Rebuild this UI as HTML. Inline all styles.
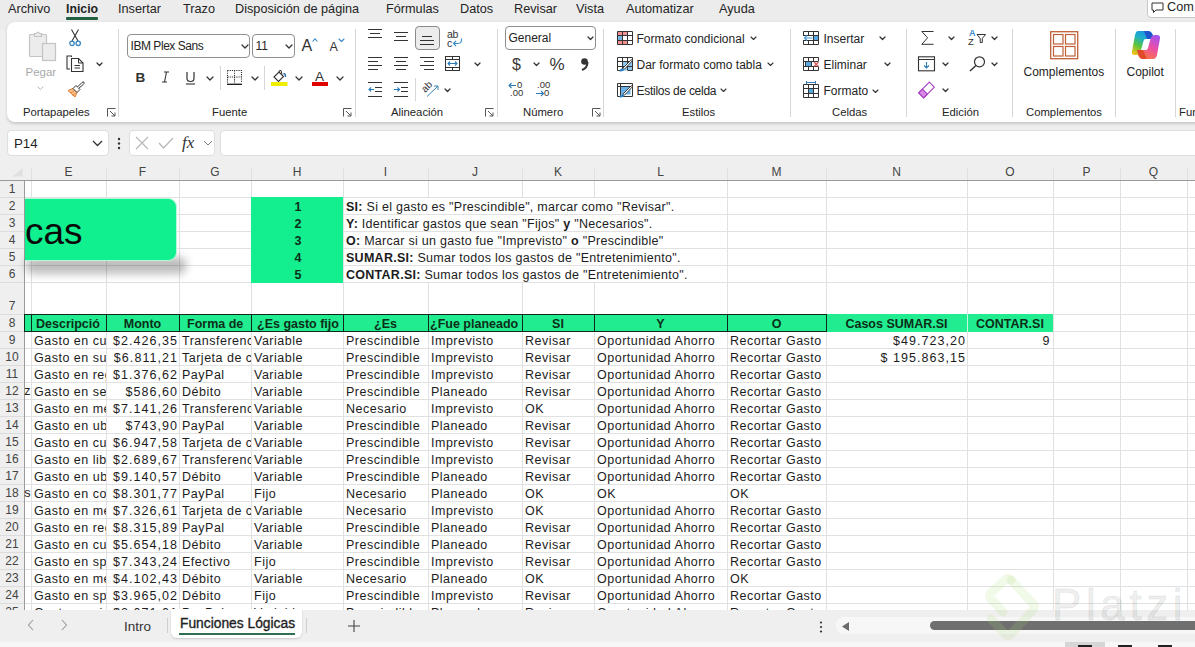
<!DOCTYPE html><html><head><meta charset="utf-8"><style>
*{margin:0;padding:0;box-sizing:border-box}
body{width:1195px;height:647px;overflow:hidden;position:relative;background:#efefef;font-family:"Liberation Sans",sans-serif;color:#242424}
.a{position:absolute;white-space:nowrap}
.t{font-size:12.7px;color:#242424}
.rb{font-size:12px;color:#242424}
.lbl{font-size:11.3px;color:#242424}
.cell{position:absolute;white-space:nowrap;overflow:hidden;font-size:12px;letter-spacing:0.6px;color:#1f1f1f;line-height:17px;padding-left:3px}
.num{letter-spacing:1px;text-align:right;padding-right:3px;padding-left:0}
.gl{position:absolute;background:#e1e1e1}
svg{position:absolute;overflow:visible}
</style></head><body>
<div class="a" style="left:0;top:0;width:1195px;height:30px;background:#ececec"></div>
<div class="a t" style="left:8px;top:1px;line-height:16px">Archivo</div>
<div class="a t" style="left:66px;top:1px;line-height:16px;font-weight:bold;font-size:12.3px">Inicio</div>
<div class="a t" style="left:118px;top:1px;line-height:16px">Insertar</div>
<div class="a t" style="left:183px;top:1px;line-height:16px">Trazo</div>
<div class="a t" style="left:235px;top:1px;line-height:16px">Disposición de página</div>
<div class="a t" style="left:386px;top:1px;line-height:16px">Fórmulas</div>
<div class="a t" style="left:460px;top:1px;line-height:16px">Datos</div>
<div class="a t" style="left:514px;top:1px;line-height:16px">Revisar</div>
<div class="a t" style="left:576px;top:1px;line-height:16px">Vista</div>
<div class="a t" style="left:626px;top:1px;line-height:16px">Automatizar</div>
<div class="a t" style="left:719px;top:1px;line-height:16px">Ayuda</div>
<div class="a" style="left:66px;top:17px;width:32px;height:3px;background:#1e6040;border-radius:1.5px;border-radius:1px"></div>
<div class="a" style="left:1147px;top:-4px;width:60px;height:22px;background:#fff;border:1px solid #c8c8c8;border-radius:4px"></div>
<div class="a t" style="left:1167px;top:-1px;line-height:16px">Com</div>
<div class="a" style="left:7px;top:22px;width:1200px;height:100px;background:#fff;border-radius:8px;box-shadow:0 1.5px 3px rgba(0,0,0,0.16)"></div>
<div class="a" style="left:118px;top:29px;width:1px;height:88px;background:#d6d6d6"></div>
<div class="a" style="left:355px;top:29px;width:1px;height:88px;background:#d6d6d6"></div>
<div class="a" style="left:497px;top:29px;width:1px;height:88px;background:#d6d6d6"></div>
<div class="a" style="left:603px;top:29px;width:1px;height:88px;background:#d6d6d6"></div>
<div class="a" style="left:790px;top:29px;width:1px;height:88px;background:#d6d6d6"></div>
<div class="a" style="left:906px;top:29px;width:1px;height:88px;background:#d6d6d6"></div>
<div class="a" style="left:1012px;top:29px;width:1px;height:88px;background:#d6d6d6"></div>
<div class="a" style="left:1115px;top:29px;width:1px;height:88px;background:#d6d6d6"></div>
<div class="a" style="left:1175px;top:29px;width:1px;height:88px;background:#d6d6d6"></div>
<div class="a lbl" style="left:23px;top:106px;line-height:13px">Portapapeles</div>
<div class="a lbl" style="left:212px;top:106px;line-height:13px">Fuente</div>
<div class="a lbl" style="left:391px;top:106px;line-height:13px">Alineación</div>
<div class="a lbl" style="left:523px;top:106px;line-height:13px">Número</div>
<div class="a lbl" style="left:682px;top:106px;line-height:13px">Estilos</div>
<div class="a lbl" style="left:832px;top:106px;line-height:13px">Celdas</div>
<div class="a lbl" style="left:942px;top:106px;line-height:13px">Edición</div>
<div class="a lbl" style="left:1026px;top:106px;line-height:13px">Complementos</div>
<div class="a lbl" style="left:1179px;top:106px;line-height:13px">Fur</div>
<svg style="left:28px;top:30px" width="30" height="32">
<rect x="1.5" y="4.5" width="17" height="22" fill="#ececec" stroke="#c4c4c4" stroke-width="1.2" rx="1"/>
<path d="M6.5 6.5 V3.5 H8.5 Q10 0.8 11.5 3.5 H13.5 V6.5 Z" fill="#ececec" stroke="#c4c4c4" stroke-width="1.2"/>
<rect x="14.5" y="13.5" width="13" height="17" fill="#ececec" stroke="#c4c4c4" stroke-width="1.2"/>
</svg>
<div class="a" style="left:25.5px;top:67.2px;font-size:11.5px;line-height:11.5px;color:#a9a9a9;">Pegar</div>
<svg style="left:36.5px;top:85.5px" width="7" height="4.5"><path d="M1 1 L3.5 3.5 L6 1" stroke="#b5b5b5" stroke-width="1" fill="none" stroke-linecap="round" stroke-linejoin="round"/></svg>
<svg style="left:69px;top:29px" width="13" height="18">
<path d="M2.5 0.5 L9 12 M9.5 0.5 L3 12" stroke="#333" stroke-width="1.1" fill="none"/>
<circle cx="3" cy="14.3" r="2.2" fill="none" stroke="#3c86c4" stroke-width="1.3"/>
<circle cx="9.2" cy="14.3" r="2.2" fill="none" stroke="#3c86c4" stroke-width="1.3"/>
</svg>
<svg style="left:66px;top:55px" width="19" height="18">
<path d="M5.5 2 V1 H1 V14 H4" stroke="#333" stroke-width="1.1" fill="none"/>
<path d="M5.5 3.5 H12.5 L17 8 V16.5 H5.5 Z" stroke="#333" stroke-width="1.1" fill="#fff"/>
<path d="M12.5 3.5 V8 H17 M8.5 10.5 H14 M8.5 13 H14" stroke="#333" stroke-width="1" fill="none"/>
</svg>
<svg style="left:95.5px;top:61.5px" width="7" height="4.5"><path d="M1 1 L3.5 3.5 L6 1" stroke="#333" stroke-width="1.25" fill="none" stroke-linecap="round" stroke-linejoin="round"/></svg>
<svg style="left:67px;top:81px" width="18" height="17">
<path d="M1 9.5 L6 7.5 L10 11.5 L8 16 Z" fill="#f9c38a" stroke="#e0782c" stroke-width="1" stroke-linejoin="round"/>
<path d="M3.5 12 L7 10 M5.5 14.5 L8.5 12" stroke="#e0782c" stroke-width="0.8"/>
<path d="M6 7.5 L9 4.5 L13 8.5 L10 11.5 Z" fill="#fff" stroke="#333" stroke-width="1" stroke-linejoin="round"/>
<path d="M10.5 6 L15 1.5 Q16.3 0.5 17 1.3 Q17.6 2.2 16.5 3.3 L11.8 7.3" fill="#fff" stroke="#333" stroke-width="1"/>
</svg>
<svg style="left:107px;top:108px" width="9" height="9"><path d="M0.5 8.5 V0.5 H8.5" stroke="#555" stroke-width="1" fill="none"/><path d="M3 3 L8 8 M8 4.5 V8 H4.5" stroke="#555" stroke-width="1" fill="none"/></svg>
<div class="a" style="left:127px;top:34px;width:123px;height:24px;border:1px solid #8f8f8f;border-radius:4px;background:#fff"></div>
<div class="a" style="left:130.5px;top:40.0px;font-size:12px;line-height:12px;color:#242424;letter-spacing:-0.45px">IBM Plex Sans</div>
<svg style="left:240.5px;top:43.5px" width="8" height="5.0"><path d="M1 1 L4.0 4.0 L7 1" stroke="#333" stroke-width="1.25" fill="none" stroke-linecap="round" stroke-linejoin="round"/></svg>
<div class="a" style="left:252px;top:34px;width:43px;height:24px;border:1px solid #8f8f8f;border-radius:4px;background:#fff"></div>
<div class="a" style="left:255.5px;top:40.0px;font-size:12px;line-height:12px;color:#242424;">11</div>
<svg style="left:285px;top:43.5px" width="8" height="5.0"><path d="M1 1 L4.0 4.0 L7 1" stroke="#333" stroke-width="1.25" fill="none" stroke-linecap="round" stroke-linejoin="round"/></svg>
<div class="a" style="left:301.5px;top:37.7px;font-size:16px;line-height:16px;color:#333;">A</div>
<svg style="left:312px;top:38px" width="7" height="4"><path d="M0.5 3.5 L3 0.8 L5.5 3.5" stroke="#3a8cc8" stroke-width="1.1" fill="none"/></svg>
<div class="a" style="left:329.5px;top:40.6px;font-size:12.5px;line-height:12.5px;color:#333;">A</div>
<svg style="left:337.5px;top:37.5px" width="7" height="4.5"><path d="M1 1 L3.5 3.5 L6 1" stroke="#3a8cc8" stroke-width="1.1" fill="none" stroke-linecap="round" stroke-linejoin="round"/></svg>
<div class="a" style="left:135.5px;top:70.6px;font-size:13.5px;line-height:13.5px;color:#333;font-weight:bold">B</div>
<svg style="left:161px;top:71px" width="9" height="12"><path d="M3 1 H8 M1 11 H6 M5.5 1 L3.5 11" stroke="#333" stroke-width="1.1" fill="none"/></svg>
<svg style="left:185px;top:71px" width="11" height="14"><path d="M2 1 V7.5 Q2 10.5 5.5 10.5 Q9 10.5 9 7.5 V1" stroke="#333" stroke-width="1.2" fill="none"/><path d="M1 13 H10" stroke="#333" stroke-width="1.1"/></svg>
<svg style="left:206px;top:75.5px" width="8" height="5.0"><path d="M1 1 L4.0 4.0 L7 1" stroke="#333" stroke-width="1.25" fill="none" stroke-linecap="round" stroke-linejoin="round"/></svg>
<div class="a" style="left:220px;top:66px;width:1px;height:24px;background:#d6d6d6"></div>
<svg style="left:226px;top:69px" width="17" height="17">
<path d="M1.5 1.5 H15.5 V14 M1.5 1.5 V14 M8.5 1.5 V14 M1.5 8 H15.5" stroke="#222" stroke-width="1.1" stroke-dasharray="1.1 1.1" fill="none"/>
<path d="M1 15.3 H16" stroke="#222" stroke-width="1.4"/>
</svg>
<svg style="left:250.5px;top:75.5px" width="8" height="5.0"><path d="M1 1 L4.0 4.0 L7 1" stroke="#333" stroke-width="1.25" fill="none" stroke-linecap="round" stroke-linejoin="round"/></svg>
<div class="a" style="left:264px;top:66px;width:1px;height:24px;background:#d6d6d6"></div>
<svg style="left:270px;top:69px" width="19" height="19">
<path d="M4 8 L9 3 L13.5 7.5 L8.5 12.5 Z" fill="#fff" stroke="#333" stroke-width="1.1"/>
<path d="M9 3 Q9 0.8 11 1.5 L12 5.5" stroke="#333" stroke-width="1" fill="none"/>
<path d="M13.5 5 Q15.5 4 15.5 8" stroke="#2a6fb0" stroke-width="1.4" fill="none"/>
<rect x="1" y="13" width="16.5" height="4" fill="#eeee00"/>
</svg>
<svg style="left:294.5px;top:75.5px" width="8" height="5.0"><path d="M1 1 L4.0 4.0 L7 1" stroke="#333" stroke-width="1.25" fill="none" stroke-linecap="round" stroke-linejoin="round"/></svg>
<div class="a" style="left:315px;top:69.6px;font-size:13.5px;line-height:13.5px;color:#333;">A</div>
<div class="a" style="left:312px;top:82px;width:16px;height:4px;background:#e00000"></div>
<svg style="left:335.5px;top:75.5px" width="8" height="5.0"><path d="M1 1 L4.0 4.0 L7 1" stroke="#333" stroke-width="1.25" fill="none" stroke-linecap="round" stroke-linejoin="round"/></svg>
<svg style="left:343px;top:108px" width="9" height="9"><path d="M0.5 8.5 V0.5 H8.5" stroke="#555" stroke-width="1" fill="none"/><path d="M3 3 L8 8 M8 4.5 V8 H4.5" stroke="#555" stroke-width="1" fill="none"/></svg>
<svg style="left:368px;top:29px" width="20" height="20"><path d="M0 0.5 H14 M2 4.5 H12 M0 8.5 H14" stroke="#333" stroke-width="1.1" fill="none"/></svg>
<svg style="left:394px;top:32px" width="20" height="20"><path d="M0 0.5 H14 M2 4.5 H12 M0 8.5 H14" stroke="#333" stroke-width="1.1" fill="none"/></svg>
<div class="a" style="left:415px;top:26px;width:25px;height:24px;background:#ececec;border:1px solid #8a8a8a;border-radius:4px"></div>
<svg style="left:420px;top:36px" width="20" height="20"><path d="M2 0.5 H12 M0 4.5 H14 M0 8.5 H14" stroke="#333" stroke-width="1.1" fill="none"/></svg>
<div class="a" style="left:447px;top:30px;font-size:10.5px;line-height:9px;color:#333;letter-spacing:-0.3px">ab<br>c</div>
<svg style="left:452px;top:38px" width="11" height="9"><path d="M9.5 0.5 Q10 5.5 6 5.5 H1.5 M4 3 L1.5 5.5 L4 8" stroke="#3a8cc8" stroke-width="1.1" fill="none"/></svg>
<svg style="left:368px;top:57px" width="20" height="20"><path d="M0 0.5 H14 M0 4.5 H10 M0 8.5 H14 M0 12.5 H10" stroke="#333" stroke-width="1.1" fill="none"/></svg>
<svg style="left:394px;top:57px" width="20" height="20"><path d="M0 0.5 H14 M2 4.5 H12 M0 8.5 H14 M2 12.5 H12" stroke="#333" stroke-width="1.1" fill="none"/></svg>
<svg style="left:420px;top:57px" width="20" height="20"><path d="M0 0.5 H14 M4 4.5 H14 M0 8.5 H14 M4 12.5 H14" stroke="#333" stroke-width="1.1" fill="none"/></svg>
<svg style="left:445px;top:56px" width="16" height="16">
<rect x="0.5" y="0.5" width="14" height="14" fill="#fff" stroke="#333" stroke-width="1"/>
<path d="M7.5 0.5 V3.5 M7.5 11.5 V14.5 M0.5 3.5 H14.5 M0.5 11.5 H14.5" stroke="#333" stroke-width="1"/>
<path d="M3 7.5 H12 M5 5.5 L3 7.5 L5 9.5 M10 5.5 L12 7.5 L10 9.5" stroke="#2a7ab8" stroke-width="1.1" fill="none"/>
</svg>
<svg style="left:474px;top:62px" width="7" height="4.5"><path d="M1 1 L3.5 3.5 L6 1" stroke="#333" stroke-width="1.25" fill="none" stroke-linecap="round" stroke-linejoin="round"/></svg>
<svg style="left:368px;top:82px" width="16" height="16">
<path d="M0 0.5 H14 M7 5.5 H14 M7 9.5 H14 M0 14.5 H14" stroke="#333" stroke-width="1.1"/>
<path d="M6 7.5 H1 M3 5.5 L1 7.5 L3 9.5" stroke="#2a7ab8" stroke-width="1.1" fill="none"/>
</svg>
<svg style="left:394px;top:82px" width="16" height="16">
<path d="M0 0.5 H14 M7 5.5 H14 M7 9.5 H14 M0 14.5 H14" stroke="#333" stroke-width="1.1"/>
<path d="M0 7.5 H5.5 M3.5 5.5 L5.5 7.5 L3.5 9.5" stroke="#2a7ab8" stroke-width="1.1" fill="none"/>
</svg>
<div class="a" style="left:415px;top:78px;width:1px;height:23px;background:#d6d6d6"></div>
<div class="a" style="left:420px;top:82px;width:14px;height:10px;font-size:10px;line-height:10px;color:#333;transform:rotate(-45deg);transform-origin:center center;text-align:center">ab</div>
<svg style="left:426px;top:84px" width="14" height="14"><path d="M1 12.5 L12 2 M8 2 H12 V6" stroke="#3a80b0" stroke-width="1" fill="none"/></svg>
<svg style="left:443.5px;top:88px" width="7" height="4.5"><path d="M1 1 L3.5 3.5 L6 1" stroke="#333" stroke-width="1.25" fill="none" stroke-linecap="round" stroke-linejoin="round"/></svg>
<svg style="left:485px;top:108px" width="9" height="9"><path d="M0.5 8.5 V0.5 H8.5" stroke="#555" stroke-width="1" fill="none"/><path d="M3 3 L8 8 M8 4.5 V8 H4.5" stroke="#555" stroke-width="1" fill="none"/></svg>
<div class="a" style="left:505px;top:26px;width:91px;height:24px;border:1px solid #8f8f8f;border-radius:4px;background:#fff"></div>
<div class="a" style="left:508.5px;top:32.0px;font-size:12px;line-height:12px;color:#242424;">General</div>
<svg style="left:586.5px;top:36px" width="7" height="4.5"><path d="M1 1 L3.5 3.5 L6 1" stroke="#333" stroke-width="1.25" fill="none" stroke-linecap="round" stroke-linejoin="round"/></svg>
<div class="a" style="left:512px;top:57.2px;font-size:16px;line-height:16px;color:#3a3a3a;">$</div>
<svg style="left:532.5px;top:61.5px" width="7" height="4.5"><path d="M1 1 L3.5 3.5 L6 1" stroke="#333" stroke-width="1.25" fill="none" stroke-linecap="round" stroke-linejoin="round"/></svg>
<div class="a" style="left:549.5px;top:56.2px;font-size:17px;line-height:17px;color:#333;font-weight:normal;-webkit-text-stroke:0">%</div>
<svg style="left:580px;top:57px" width="9" height="14"><circle cx="4.5" cy="4.5" r="3.3" fill="#333"/><path d="M7.5 5 Q7.5 11 2 13" stroke="#333" stroke-width="2" fill="none"/></svg>
<svg style="left:508px;top:82px" width="9" height="7"><path d="M8 3.5 H1 M3.5 1 L1 3.5 L3.5 6" stroke="#2a7ab8" stroke-width="1.1" fill="none"/></svg>
<div class="a" style="left:517px;top:81px;font-size:9.5px;line-height:8px;color:#333">0</div>
<div class="a" style="left:510px;top:89px;font-size:9.5px;line-height:8px;color:#333">.00</div>
<div class="a" style="left:537px;top:81px;font-size:9.5px;line-height:8px;color:#333">.00</div>
<div class="a" style="left:544px;top:89px;font-size:9.5px;line-height:8px;color:#333">0</div>
<svg style="left:535px;top:90px" width="10" height="7"><path d="M1 3.5 H8.5 M6 1 L8.5 3.5 L6 6" stroke="#2a7ab8" stroke-width="1.1" fill="none"/></svg>
<svg style="left:592px;top:108px" width="9" height="9"><path d="M0.5 8.5 V0.5 H8.5" stroke="#555" stroke-width="1" fill="none"/><path d="M3 3 L8 8 M8 4.5 V8 H4.5" stroke="#555" stroke-width="1" fill="none"/></svg>
<svg style="left:616px;top:30px" width="18" height="16">
<rect x="1.5" y="1.5" width="10" height="4" fill="#f39090"/>
<rect x="1.5" y="10.5" width="10" height="4" fill="#f39090"/>
<rect x="1.5" y="5.5" width="5" height="5" fill="#7ab4e0"/>
<path d="M1.5 1.5 H16.5 V14.5 H1.5 Z M6.5 1.5 V14.5 M11.5 1.5 V14.5 M1.5 5.5 H16.5 M1.5 10.5 H16.5" stroke="#333" stroke-width="1" fill="none"/>
</svg>
<div class="a" style="left:636.5px;top:33.0px;font-size:12px;line-height:12px;color:#242424;">Formato condicional</div>
<svg style="left:749.5px;top:36px" width="7" height="4.5"><path d="M1 1 L3.5 3.5 L6 1" stroke="#333" stroke-width="1.1" fill="none" stroke-linecap="round" stroke-linejoin="round"/></svg>
<svg style="left:616px;top:56px" width="18" height="16">
<rect x="6.5" y="5.5" width="10" height="9" fill="#8ec6ee"/>
<path d="M1.5 14.5 V1.5 H16.5 V14.5 M6.5 1.5 V14.5 M11.5 1.5 V14.5 M1.5 5.5 H16.5 M1.5 10.5 H16.5 M1.5 14.5 H5 M12 14.5 H16.5" stroke="#333" stroke-width="1" fill="none"/>
<path d="M6.5 12.5 L14.8 4.2 Q16.3 3 16.6 4.6 L8.3 13.3 Z" fill="#fff" stroke="#333" stroke-width="0.9"/>
<path d="M3.5 15.5 Q3.8 12.3 6.5 12.5 L8.3 13.3 Q7.8 15.8 3.5 15.5 Z" fill="#2f7fc4"/>
</svg>
<div class="a" style="left:636.5px;top:59.0px;font-size:12px;line-height:12px;color:#242424;">Dar formato como tabla</div>
<svg style="left:766.5px;top:62px" width="7" height="4.5"><path d="M1 1 L3.5 3.5 L6 1" stroke="#333" stroke-width="1.1" fill="none" stroke-linecap="round" stroke-linejoin="round"/></svg>
<svg style="left:616px;top:82px" width="18" height="16">
<rect x="4.5" y="4.5" width="10" height="8" fill="#6ab0e4"/>
<path d="M1.5 1.5 H16.5 V14.5 H1.5 Z M1.5 4.5 H16.5 M4.5 1.5 V14.5" stroke="#333" stroke-width="1" fill="none"/>
<path d="M6.5 12.5 L14.8 4.2 Q16.3 3 16.6 4.6 L8.3 13.3 Z" fill="#fff" stroke="#333" stroke-width="0.9"/>
<path d="M3.5 15.5 Q3.8 12.3 6.5 12.5 L8.3 13.3 Q7.8 15.8 3.5 15.5 Z" fill="#2f7fc4"/>
</svg>
<div class="a" style="left:636.5px;top:84.5px;font-size:12px;line-height:12px;color:#242424;letter-spacing:-0.27px">Estilos de celda</div>
<svg style="left:719.5px;top:88px" width="7" height="4.5"><path d="M1 1 L3.5 3.5 L6 1" stroke="#333" stroke-width="1.1" fill="none" stroke-linecap="round" stroke-linejoin="round"/></svg>
<svg style="left:802px;top:30px" width="18" height="16">
<rect x="11.5" y="5.5" width="5" height="5" fill="#5aa6de"/>
<path d="M1.5 1.5 H16.5 V14.5 H1.5 Z M6.5 1.5 V14.5 M11.5 1.5 V14.5 M1.5 5.5 H16.5 M1.5 10.5 H16.5" stroke="#333" stroke-width="1" fill="none"/>
<rect x="1" y="6" width="10" height="4" fill="#fff"/>
<path d="M10.5 8 H2.5 M5 5.5 L2.5 8 L5 10.5" stroke="#4a9ad6" stroke-width="1.2" fill="none"/>
</svg>
<div class="a" style="left:823.5px;top:33.0px;font-size:12px;line-height:12px;color:#242424;">Insertar</div>
<svg style="left:879px;top:36px" width="7" height="4.5"><path d="M1 1 L3.5 3.5 L6 1" stroke="#333" stroke-width="1.25" fill="none" stroke-linecap="round" stroke-linejoin="round"/></svg>
<svg style="left:802px;top:56px" width="18" height="16">
<path d="M1.5 1.5 H16.5 M1.5 14.5 H16.5 M1.5 1.5 V14.5 M16.5 1.5 V5 M16.5 11 V14.5 M6.5 1.5 V5.5 M11.5 1.5 V5.5 M6.5 10.5 V14.5 M11.5 10.5 V14.5 M1.5 5.5 H3.5 M1.5 10.5 H3.5 M9.5 5.5 H16.5 M9.5 10.5 H16.5" stroke="#333" stroke-width="1" fill="none"/>
<rect x="3.5" y="5.5" width="6" height="5" fill="#5aa6de" stroke="#333" stroke-width="1"/>
<path d="M12 6 L16.5 10.5 M16.5 6 L12 10.5" stroke="#e05050" stroke-width="1.1"/>
</svg>
<div class="a" style="left:823.5px;top:59.0px;font-size:12px;line-height:12px;color:#242424;">Eliminar</div>
<svg style="left:883.5px;top:62px" width="7" height="4.5"><path d="M1 1 L3.5 3.5 L6 1" stroke="#333" stroke-width="1.25" fill="none" stroke-linecap="round" stroke-linejoin="round"/></svg>
<svg style="left:802px;top:81px" width="18" height="18">
<rect x="6.5" y="7.5" width="5" height="5" fill="#5aa6de"/>
<path d="M4.5 1.5 H13.5 M4.5 0 V3 M13.5 0 V3" stroke="#3a80c0" stroke-width="1"/>
<path d="M1.5 3.5 H16.5 V16.5 H1.5 Z M6.5 3.5 V16.5 M11.5 3.5 V16.5 M1.5 7.5 H16.5 M1.5 12.5 H16.5" stroke="#333" stroke-width="1" fill="none"/>
</svg>
<div class="a" style="left:823.5px;top:84.5px;font-size:12px;line-height:12px;color:#242424;">Formato</div>
<svg style="left:872px;top:89px" width="7" height="4.5"><path d="M1 1 L3.5 3.5 L6 1" stroke="#333" stroke-width="1.1" fill="none" stroke-linecap="round" stroke-linejoin="round"/></svg>
<svg style="left:920px;top:30px" width="15" height="16"><path d="M13.5 1.5 H1.8 L7.6 7.8 L1.8 14.3 H13.5" stroke="#333" stroke-width="1" fill="none" stroke-linejoin="miter"/></svg>
<svg style="left:948px;top:36px" width="7" height="4.5"><path d="M1 1 L3.5 3.5 L6 1" stroke="#333" stroke-width="1.25" fill="none" stroke-linecap="round" stroke-linejoin="round"/></svg>
<div class="a" style="left:969px;top:29px;font-size:9px;line-height:8px;color:#3a8cc8;font-weight:bold">A</div>
<div class="a" style="left:968px;top:37px;font-size:9.5px;line-height:9px;color:#333">Z</div>
<svg style="left:976px;top:33px" width="11" height="11"><path d="M1 1.5 H9.5 L6.3 5.5 V9.5 H4.2 V5.5 Z" fill="#fff" stroke="#333" stroke-width="1"/></svg>
<svg style="left:991px;top:36px" width="7" height="4.5"><path d="M1 1 L3.5 3.5 L6 1" stroke="#333" stroke-width="1.25" fill="none" stroke-linecap="round" stroke-linejoin="round"/></svg>
<svg style="left:918px;top:56px" width="18" height="16">
<rect x="0.5" y="0.8" width="16" height="14" fill="#fff" stroke="#333" stroke-width="1.1"/>
<path d="M0.5 3.5 H16.5" stroke="#333" stroke-width="1"/>
<path d="M8.5 6 V12 M6 9.5 L8.5 12 L11 9.5" stroke="#2a7ab8" stroke-width="1.1" fill="none"/>
</svg>
<svg style="left:941.5px;top:61.5px" width="7" height="4.5"><path d="M1 1 L3.5 3.5 L6 1" stroke="#333" stroke-width="1.25" fill="none" stroke-linecap="round" stroke-linejoin="round"/></svg>
<svg style="left:969px;top:56px" width="17" height="16"><circle cx="10.5" cy="5.8" r="5" fill="none" stroke="#333" stroke-width="1.2"/><path d="M7 9.5 L1 15" stroke="#333" stroke-width="1.4"/></svg>
<svg style="left:991px;top:62px" width="7" height="4.5"><path d="M1 1 L3.5 3.5 L6 1" stroke="#333" stroke-width="1.25" fill="none" stroke-linecap="round" stroke-linejoin="round"/></svg>
<svg style="left:918px;top:82px" width="18" height="17">
<path d="M16.3 5.2 L11.3 0.2 L0.7 10.8 L5.7 15.8 Z" fill="#fff" stroke="#a63cc0" stroke-width="1.1" stroke-linejoin="round"/>
<path d="M0.7 10.8 L4.4 7.1 L9.4 12.1 L5.7 15.8 Z" fill="#d98ae8" stroke="#a63cc0" stroke-width="1.1" stroke-linejoin="round"/>
</svg>
<svg style="left:941.5px;top:87.5px" width="7" height="4.5"><path d="M1 1 L3.5 3.5 L6 1" stroke="#333" stroke-width="1.25" fill="none" stroke-linecap="round" stroke-linejoin="round"/></svg>
<svg style="left:1050px;top:31px" width="29" height="29">
<rect x="0.7" y="0.7" width="27" height="27" fill="#fff" stroke="#c06038" stroke-width="1.3"/>
<rect x="3.5" y="3.5" width="9.5" height="9.5" fill="none" stroke="#c06038" stroke-width="1.2"/>
<rect x="15.5" y="3.5" width="9.5" height="9.5" fill="none" stroke="#c06038" stroke-width="1.2"/>
<rect x="3.5" y="15.5" width="9.5" height="9.5" fill="none" stroke="#c06038" stroke-width="1.2"/>
<rect x="15.5" y="15.5" width="9.5" height="9.5" fill="none" stroke="#c06038" stroke-width="1.2"/>
</svg>
<div class="a" style="left:1023.5px;top:65.5px;font-size:12px;line-height:12px;color:#242424;">Complementos</div>
<svg style="left:1131px;top:30px" width="31" height="30">
<defs>
<linearGradient id="cg1" x1="0.7" y1="0" x2="0.2" y2="1"><stop offset="0" stop-color="#1a8ee8"/><stop offset="0.35" stop-color="#20b0c8"/><stop offset="0.65" stop-color="#58c43c"/><stop offset="1" stop-color="#f2c21a"/></linearGradient>
<linearGradient id="cg2" x1="0.8" y1="0" x2="0.3" y2="1"><stop offset="0" stop-color="#a452ee"/><stop offset="0.5" stop-color="#ee4fa2"/><stop offset="1" stop-color="#f87a3c"/></linearGradient>
</defs>
<path d="M7 1 H17 Q20 1 21.5 4.5 L23 9 H14.5 Q13 9 12.5 11 L10 20 Q9 25 5 25 H3.5 Q0.5 25 1 21.5 L4 5 Q5 1 7 1 Z" fill="url(#cg1)"/>
<path d="M13 1 H17 Q20 1 21.5 4.5 L23 9 H16 Z" fill="#1f55cc"/>
<path d="M22 29 H12 Q9 29 7.5 25.5 L6 20 H15 Q16.5 20 17 18 L19.5 9 Q20.5 5 24.5 5 H26 Q29.5 5 29 8.5 L26 25 Q25 29 22 29 Z" fill="url(#cg2)"/>
<path d="M6 20 H12 L16 29 H12 Q9 29 7.5 25.5 Z" fill="#e24a2c"/>
</svg>
<div class="a" style="left:1126.5px;top:65.5px;font-size:12px;line-height:12px;color:#242424;">Copilot</div>
<svg style="left:1151px;top:2px" width="14" height="12"><path d="M1 1 H12 V8 H5 L2.5 10.5 V8 H1 Z" fill="none" stroke="#333" stroke-width="1" stroke-linejoin="round"/></svg>
<div class="a" style="left:7px;top:130px;width:102px;height:26px;background:#fff;border:1px solid #dedede;border-radius:4px"></div>
<div class="a" style="left:14px;top:137px;font-size:13.3px;line-height:14px;color:#1f1f1f">P14</div>
<svg style="left:92px;top:140px" width="11" height="7"><path d="M1 1 L5.5 5.5 L10 1" stroke="#333" stroke-width="1.3" fill="none"/></svg>
<svg style="left:117px;top:137px" width="4" height="13"><circle cx="2" cy="2" r="1.2" fill="#333"/><circle cx="2" cy="6.5" r="1.2" fill="#333"/><circle cx="2" cy="11" r="1.2" fill="#333"/></svg>
<div class="a" style="left:129px;top:130px;width:86px;height:26px;background:#fff;border:1px solid #dedede;border-radius:4px"></div>
<svg style="left:135px;top:136px" width="14" height="14"><path d="M1 1 L13 13 M13 1 L1 13" stroke="#b8b8b8" stroke-width="1.2"/></svg>
<svg style="left:158px;top:137px" width="16" height="12"><path d="M1 6 L5.5 11 L15 1" stroke="#b8b8b8" stroke-width="1.2" fill="none"/></svg>
<div class="a" style="left:182px;top:133px;font-family:'Liberation Serif',serif;font-style:italic;font-size:17px;line-height:20px;color:#333">fx</div>
<svg style="left:203px;top:140px" width="10" height="6"><path d="M1 1 L5 5 L9 1" stroke="#777" stroke-width="1" fill="none"/></svg>
<div class="a" style="left:220px;top:130px;width:1000px;height:26px;background:#fff;border:1px solid #dedede;border-radius:4px"></div>
<div class="a" style="left:24px;top:180px;width:1171px;height:430px;background:#fff"></div>
<div class="gl" style="left:0;top:197px;width:1195px;height:1px"></div>
<div class="gl" style="left:0;top:214px;width:1195px;height:1px"></div>
<div class="gl" style="left:0;top:231px;width:1195px;height:1px"></div>
<div class="gl" style="left:0;top:248px;width:1195px;height:1px"></div>
<div class="gl" style="left:0;top:265px;width:1195px;height:1px"></div>
<div class="gl" style="left:0;top:282px;width:1195px;height:1px"></div>
<div class="gl" style="left:0;top:314px;width:1195px;height:1px"></div>
<div class="gl" style="left:0;top:331px;width:1195px;height:1px"></div>
<div class="gl" style="left:0;top:348px;width:1195px;height:1px"></div>
<div class="gl" style="left:0;top:365px;width:1195px;height:1px"></div>
<div class="gl" style="left:0;top:382px;width:1195px;height:1px"></div>
<div class="gl" style="left:0;top:399px;width:1195px;height:1px"></div>
<div class="gl" style="left:0;top:416px;width:1195px;height:1px"></div>
<div class="gl" style="left:0;top:433px;width:1195px;height:1px"></div>
<div class="gl" style="left:0;top:450px;width:1195px;height:1px"></div>
<div class="gl" style="left:0;top:467px;width:1195px;height:1px"></div>
<div class="gl" style="left:0;top:484px;width:1195px;height:1px"></div>
<div class="gl" style="left:0;top:501px;width:1195px;height:1px"></div>
<div class="gl" style="left:0;top:518px;width:1195px;height:1px"></div>
<div class="gl" style="left:0;top:535px;width:1195px;height:1px"></div>
<div class="gl" style="left:0;top:552px;width:1195px;height:1px"></div>
<div class="gl" style="left:0;top:569px;width:1195px;height:1px"></div>
<div class="gl" style="left:0;top:586px;width:1195px;height:1px"></div>
<div class="gl" style="left:0;top:603px;width:1195px;height:1px"></div>
<div class="gl" style="left:31px;top:168px;width:1px;height:442px"></div>
<div class="gl" style="left:106px;top:168px;width:1px;height:442px"></div>
<div class="gl" style="left:179px;top:168px;width:1px;height:442px"></div>
<div class="gl" style="left:251px;top:168px;width:1px;height:442px"></div>
<div class="gl" style="left:343px;top:168px;width:1px;height:442px"></div>
<div class="gl" style="left:428px;top:168px;width:1px;height:442px"></div>
<div class="gl" style="left:522px;top:168px;width:1px;height:442px"></div>
<div class="gl" style="left:594px;top:168px;width:1px;height:442px"></div>
<div class="gl" style="left:727px;top:168px;width:1px;height:442px"></div>
<div class="gl" style="left:826px;top:168px;width:1px;height:442px"></div>
<div class="gl" style="left:967px;top:168px;width:1px;height:442px"></div>
<div class="gl" style="left:1053px;top:168px;width:1px;height:442px"></div>
<div class="gl" style="left:1120px;top:168px;width:1px;height:442px"></div>
<div class="gl" style="left:1187px;top:168px;width:1px;height:442px"></div>
<div class="a" style="left:0;top:180px;width:24px;height:430px;background:#efefef"></div>
<div class="a" style="left:0;top:197px;width:24px;height:1px;background:#dcdcdc"></div>
<div class="a" style="left:0;top:180px;width:24px;height:17px;font-size:12px;line-height:18px;text-align:center;color:#444;padding-top:0px">1</div>
<div class="a" style="left:0;top:214px;width:24px;height:1px;background:#dcdcdc"></div>
<div class="a" style="left:0;top:197px;width:24px;height:17px;font-size:12px;line-height:18px;text-align:center;color:#444;padding-top:0px">2</div>
<div class="a" style="left:0;top:231px;width:24px;height:1px;background:#dcdcdc"></div>
<div class="a" style="left:0;top:214px;width:24px;height:17px;font-size:12px;line-height:18px;text-align:center;color:#444;padding-top:0px">3</div>
<div class="a" style="left:0;top:248px;width:24px;height:1px;background:#dcdcdc"></div>
<div class="a" style="left:0;top:231px;width:24px;height:17px;font-size:12px;line-height:18px;text-align:center;color:#444;padding-top:0px">4</div>
<div class="a" style="left:0;top:265px;width:24px;height:1px;background:#dcdcdc"></div>
<div class="a" style="left:0;top:248px;width:24px;height:17px;font-size:12px;line-height:18px;text-align:center;color:#444;padding-top:0px">5</div>
<div class="a" style="left:0;top:282px;width:24px;height:1px;background:#dcdcdc"></div>
<div class="a" style="left:0;top:265px;width:24px;height:17px;font-size:12px;line-height:18px;text-align:center;color:#444;padding-top:0px">6</div>
<div class="a" style="left:0;top:314px;width:24px;height:1px;background:#dcdcdc"></div>
<div class="a" style="left:0;top:282px;width:24px;height:32px;font-size:12px;line-height:18px;text-align:center;color:#444;padding-top:15px">7</div>
<div class="a" style="left:0;top:331px;width:24px;height:1px;background:#dcdcdc"></div>
<div class="a" style="left:0;top:314px;width:24px;height:17px;font-size:12px;line-height:18px;text-align:center;color:#444;padding-top:0px">8</div>
<div class="a" style="left:0;top:348px;width:24px;height:1px;background:#dcdcdc"></div>
<div class="a" style="left:0;top:331px;width:24px;height:17px;font-size:12px;line-height:18px;text-align:center;color:#444;padding-top:0px">9</div>
<div class="a" style="left:0;top:365px;width:24px;height:1px;background:#dcdcdc"></div>
<div class="a" style="left:0;top:348px;width:24px;height:17px;font-size:12px;line-height:18px;text-align:center;color:#444;padding-top:0px">10</div>
<div class="a" style="left:0;top:382px;width:24px;height:1px;background:#dcdcdc"></div>
<div class="a" style="left:0;top:365px;width:24px;height:17px;font-size:12px;line-height:18px;text-align:center;color:#444;padding-top:0px">11</div>
<div class="a" style="left:0;top:399px;width:24px;height:1px;background:#dcdcdc"></div>
<div class="a" style="left:0;top:382px;width:24px;height:17px;font-size:12px;line-height:18px;text-align:center;color:#444;padding-top:0px">12</div>
<div class="a" style="left:0;top:416px;width:24px;height:1px;background:#dcdcdc"></div>
<div class="a" style="left:0;top:399px;width:24px;height:17px;font-size:12px;line-height:18px;text-align:center;color:#444;padding-top:0px">13</div>
<div class="a" style="left:0;top:433px;width:24px;height:1px;background:#dcdcdc"></div>
<div class="a" style="left:0;top:416px;width:24px;height:17px;font-size:12px;line-height:18px;text-align:center;color:#444;padding-top:0px">14</div>
<div class="a" style="left:0;top:450px;width:24px;height:1px;background:#dcdcdc"></div>
<div class="a" style="left:0;top:433px;width:24px;height:17px;font-size:12px;line-height:18px;text-align:center;color:#444;padding-top:0px">15</div>
<div class="a" style="left:0;top:467px;width:24px;height:1px;background:#dcdcdc"></div>
<div class="a" style="left:0;top:450px;width:24px;height:17px;font-size:12px;line-height:18px;text-align:center;color:#444;padding-top:0px">16</div>
<div class="a" style="left:0;top:484px;width:24px;height:1px;background:#dcdcdc"></div>
<div class="a" style="left:0;top:467px;width:24px;height:17px;font-size:12px;line-height:18px;text-align:center;color:#444;padding-top:0px">17</div>
<div class="a" style="left:0;top:501px;width:24px;height:1px;background:#dcdcdc"></div>
<div class="a" style="left:0;top:484px;width:24px;height:17px;font-size:12px;line-height:18px;text-align:center;color:#444;padding-top:0px">18</div>
<div class="a" style="left:0;top:518px;width:24px;height:1px;background:#dcdcdc"></div>
<div class="a" style="left:0;top:501px;width:24px;height:17px;font-size:12px;line-height:18px;text-align:center;color:#444;padding-top:0px">19</div>
<div class="a" style="left:0;top:535px;width:24px;height:1px;background:#dcdcdc"></div>
<div class="a" style="left:0;top:518px;width:24px;height:17px;font-size:12px;line-height:18px;text-align:center;color:#444;padding-top:0px">20</div>
<div class="a" style="left:0;top:552px;width:24px;height:1px;background:#dcdcdc"></div>
<div class="a" style="left:0;top:535px;width:24px;height:17px;font-size:12px;line-height:18px;text-align:center;color:#444;padding-top:0px">21</div>
<div class="a" style="left:0;top:569px;width:24px;height:1px;background:#dcdcdc"></div>
<div class="a" style="left:0;top:552px;width:24px;height:17px;font-size:12px;line-height:18px;text-align:center;color:#444;padding-top:0px">22</div>
<div class="a" style="left:0;top:586px;width:24px;height:1px;background:#dcdcdc"></div>
<div class="a" style="left:0;top:569px;width:24px;height:17px;font-size:12px;line-height:18px;text-align:center;color:#444;padding-top:0px">23</div>
<div class="a" style="left:0;top:603px;width:24px;height:1px;background:#dcdcdc"></div>
<div class="a" style="left:0;top:586px;width:24px;height:17px;font-size:12px;line-height:18px;text-align:center;color:#444;padding-top:0px">24</div>
<div class="a" style="left:0;top:603px;width:24px;height:17px;font-size:12px;line-height:18px;text-align:center;color:#444;padding-top:0px">25</div>
<div class="a" style="left:0;top:180px;width:1195px;height:1px;background:#9a9a9a"></div>
<div class="a" style="left:24px;top:180px;width:1px;height:430px;background:#9a9a9a"></div>
<div class="a" style="left:31px;top:165px;width:75px;text-align:center;font-size:12px;line-height:14px;color:#444">E</div>
<div class="a" style="left:106px;top:165px;width:73px;text-align:center;font-size:12px;line-height:14px;color:#444">F</div>
<div class="a" style="left:179px;top:165px;width:72px;text-align:center;font-size:12px;line-height:14px;color:#444">G</div>
<div class="a" style="left:251px;top:165px;width:92px;text-align:center;font-size:12px;line-height:14px;color:#444">H</div>
<div class="a" style="left:343px;top:165px;width:85px;text-align:center;font-size:12px;line-height:14px;color:#444">I</div>
<div class="a" style="left:428px;top:165px;width:94px;text-align:center;font-size:12px;line-height:14px;color:#444">J</div>
<div class="a" style="left:522px;top:165px;width:72px;text-align:center;font-size:12px;line-height:14px;color:#444">K</div>
<div class="a" style="left:594px;top:165px;width:133px;text-align:center;font-size:12px;line-height:14px;color:#444">L</div>
<div class="a" style="left:727px;top:165px;width:99px;text-align:center;font-size:12px;line-height:14px;color:#444">M</div>
<div class="a" style="left:826px;top:165px;width:141px;text-align:center;font-size:12px;line-height:14px;color:#444">N</div>
<div class="a" style="left:967px;top:165px;width:86px;text-align:center;font-size:12px;line-height:14px;color:#444">O</div>
<div class="a" style="left:1053px;top:165px;width:67px;text-align:center;font-size:12px;line-height:14px;color:#444">P</div>
<div class="a" style="left:1120px;top:165px;width:67px;text-align:center;font-size:12px;line-height:14px;color:#444">Q</div>
<div class="a" style="left:1187px;top:165px;width:73px;text-align:center;font-size:12px;line-height:14px;color:#444">R</div>
<svg style="left:12px;top:168px" width="11" height="9"><path d="M10.5 0 L10.5 8.5 L0.5 8.5 Z" fill="#e0e0e0"/></svg>
<div class="a" style="left:32px;top:331px;width:74px;height:17px;overflow:hidden;font-size:12.5px;letter-spacing:0.5px;line-height:20px;padding-left:2px;color:#1c1c1c;">Gasto en cur</div>
<div class="a" style="left:107px;top:331px;width:72px;height:17px;overflow:hidden;font-size:12.5px;letter-spacing:0.5px;line-height:20px;padding-right:1px;text-align:right;color:#1c1c1c;letter-spacing:1.05px">$2.426,35</div>
<div class="a" style="left:180px;top:331px;width:71px;height:17px;overflow:hidden;font-size:12.5px;letter-spacing:0.5px;line-height:20px;padding-left:2px;color:#1c1c1c;">Transferencia</div>
<div class="a" style="left:252px;top:331px;width:91px;height:17px;overflow:hidden;font-size:12.5px;letter-spacing:0.5px;line-height:20px;padding-left:2px;color:#1c1c1c;">Variable</div>
<div class="a" style="left:344px;top:331px;width:84px;height:17px;overflow:hidden;font-size:12.5px;letter-spacing:0.5px;line-height:20px;padding-left:2px;color:#1c1c1c;">Prescindible</div>
<div class="a" style="left:429px;top:331px;width:93px;height:17px;overflow:hidden;font-size:12.5px;letter-spacing:0.5px;line-height:20px;padding-left:2px;color:#1c1c1c;">Imprevisto</div>
<div class="a" style="left:523px;top:331px;width:71px;height:17px;overflow:hidden;font-size:12.5px;letter-spacing:0.5px;line-height:20px;padding-left:2px;color:#1c1c1c;">Revisar</div>
<div class="a" style="left:595px;top:331px;width:132px;height:17px;overflow:hidden;font-size:12.5px;letter-spacing:0.5px;line-height:20px;padding-left:2px;color:#1c1c1c;">Oportunidad Ahorro</div>
<div class="a" style="left:728px;top:331px;width:98px;height:17px;overflow:hidden;font-size:12.5px;letter-spacing:0.5px;line-height:20px;padding-left:2px;color:#1c1c1c;">Recortar Gasto</div>
<div class="a" style="left:32px;top:348px;width:74px;height:17px;overflow:hidden;font-size:12.5px;letter-spacing:0.5px;line-height:20px;padding-left:2px;color:#1c1c1c;">Gasto en sup</div>
<div class="a" style="left:107px;top:348px;width:72px;height:17px;overflow:hidden;font-size:12.5px;letter-spacing:0.5px;line-height:20px;padding-right:1px;text-align:right;color:#1c1c1c;letter-spacing:1.05px">$6.811,21</div>
<div class="a" style="left:180px;top:348px;width:71px;height:17px;overflow:hidden;font-size:12.5px;letter-spacing:0.5px;line-height:20px;padding-left:2px;color:#1c1c1c;">Tarjeta de crédito</div>
<div class="a" style="left:252px;top:348px;width:91px;height:17px;overflow:hidden;font-size:12.5px;letter-spacing:0.5px;line-height:20px;padding-left:2px;color:#1c1c1c;">Variable</div>
<div class="a" style="left:344px;top:348px;width:84px;height:17px;overflow:hidden;font-size:12.5px;letter-spacing:0.5px;line-height:20px;padding-left:2px;color:#1c1c1c;">Prescindible</div>
<div class="a" style="left:429px;top:348px;width:93px;height:17px;overflow:hidden;font-size:12.5px;letter-spacing:0.5px;line-height:20px;padding-left:2px;color:#1c1c1c;">Imprevisto</div>
<div class="a" style="left:523px;top:348px;width:71px;height:17px;overflow:hidden;font-size:12.5px;letter-spacing:0.5px;line-height:20px;padding-left:2px;color:#1c1c1c;">Revisar</div>
<div class="a" style="left:595px;top:348px;width:132px;height:17px;overflow:hidden;font-size:12.5px;letter-spacing:0.5px;line-height:20px;padding-left:2px;color:#1c1c1c;">Oportunidad Ahorro</div>
<div class="a" style="left:728px;top:348px;width:98px;height:17px;overflow:hidden;font-size:12.5px;letter-spacing:0.5px;line-height:20px;padding-left:2px;color:#1c1c1c;">Recortar Gasto</div>
<div class="a" style="left:32px;top:365px;width:74px;height:17px;overflow:hidden;font-size:12.5px;letter-spacing:0.5px;line-height:20px;padding-left:2px;color:#1c1c1c;">Gasto en reg</div>
<div class="a" style="left:107px;top:365px;width:72px;height:17px;overflow:hidden;font-size:12.5px;letter-spacing:0.5px;line-height:20px;padding-right:1px;text-align:right;color:#1c1c1c;letter-spacing:1.05px">$1.376,62</div>
<div class="a" style="left:180px;top:365px;width:71px;height:17px;overflow:hidden;font-size:12.5px;letter-spacing:0.5px;line-height:20px;padding-left:2px;color:#1c1c1c;">PayPal</div>
<div class="a" style="left:252px;top:365px;width:91px;height:17px;overflow:hidden;font-size:12.5px;letter-spacing:0.5px;line-height:20px;padding-left:2px;color:#1c1c1c;">Variable</div>
<div class="a" style="left:344px;top:365px;width:84px;height:17px;overflow:hidden;font-size:12.5px;letter-spacing:0.5px;line-height:20px;padding-left:2px;color:#1c1c1c;">Prescindible</div>
<div class="a" style="left:429px;top:365px;width:93px;height:17px;overflow:hidden;font-size:12.5px;letter-spacing:0.5px;line-height:20px;padding-left:2px;color:#1c1c1c;">Imprevisto</div>
<div class="a" style="left:523px;top:365px;width:71px;height:17px;overflow:hidden;font-size:12.5px;letter-spacing:0.5px;line-height:20px;padding-left:2px;color:#1c1c1c;">Revisar</div>
<div class="a" style="left:595px;top:365px;width:132px;height:17px;overflow:hidden;font-size:12.5px;letter-spacing:0.5px;line-height:20px;padding-left:2px;color:#1c1c1c;">Oportunidad Ahorro</div>
<div class="a" style="left:728px;top:365px;width:98px;height:17px;overflow:hidden;font-size:12.5px;letter-spacing:0.5px;line-height:20px;padding-left:2px;color:#1c1c1c;">Recortar Gasto</div>
<div class="a" style="left:32px;top:382px;width:74px;height:17px;overflow:hidden;font-size:12.5px;letter-spacing:0.5px;line-height:20px;padding-left:2px;color:#1c1c1c;">Gasto en ser</div>
<div class="a" style="left:107px;top:382px;width:72px;height:17px;overflow:hidden;font-size:12.5px;letter-spacing:0.5px;line-height:20px;padding-right:1px;text-align:right;color:#1c1c1c;letter-spacing:1.05px">$586,60</div>
<div class="a" style="left:180px;top:382px;width:71px;height:17px;overflow:hidden;font-size:12.5px;letter-spacing:0.5px;line-height:20px;padding-left:2px;color:#1c1c1c;">Débito</div>
<div class="a" style="left:252px;top:382px;width:91px;height:17px;overflow:hidden;font-size:12.5px;letter-spacing:0.5px;line-height:20px;padding-left:2px;color:#1c1c1c;">Variable</div>
<div class="a" style="left:344px;top:382px;width:84px;height:17px;overflow:hidden;font-size:12.5px;letter-spacing:0.5px;line-height:20px;padding-left:2px;color:#1c1c1c;">Prescindible</div>
<div class="a" style="left:429px;top:382px;width:93px;height:17px;overflow:hidden;font-size:12.5px;letter-spacing:0.5px;line-height:20px;padding-left:2px;color:#1c1c1c;">Planeado</div>
<div class="a" style="left:523px;top:382px;width:71px;height:17px;overflow:hidden;font-size:12.5px;letter-spacing:0.5px;line-height:20px;padding-left:2px;color:#1c1c1c;">Revisar</div>
<div class="a" style="left:595px;top:382px;width:132px;height:17px;overflow:hidden;font-size:12.5px;letter-spacing:0.5px;line-height:20px;padding-left:2px;color:#1c1c1c;">Oportunidad Ahorro</div>
<div class="a" style="left:728px;top:382px;width:98px;height:17px;overflow:hidden;font-size:12.5px;letter-spacing:0.5px;line-height:20px;padding-left:2px;color:#1c1c1c;">Recortar Gasto</div>
<div class="a" style="left:32px;top:399px;width:74px;height:17px;overflow:hidden;font-size:12.5px;letter-spacing:0.5px;line-height:20px;padding-left:2px;color:#1c1c1c;">Gasto en me</div>
<div class="a" style="left:107px;top:399px;width:72px;height:17px;overflow:hidden;font-size:12.5px;letter-spacing:0.5px;line-height:20px;padding-right:1px;text-align:right;color:#1c1c1c;letter-spacing:1.05px">$7.141,26</div>
<div class="a" style="left:180px;top:399px;width:71px;height:17px;overflow:hidden;font-size:12.5px;letter-spacing:0.5px;line-height:20px;padding-left:2px;color:#1c1c1c;">Transferencia</div>
<div class="a" style="left:252px;top:399px;width:91px;height:17px;overflow:hidden;font-size:12.5px;letter-spacing:0.5px;line-height:20px;padding-left:2px;color:#1c1c1c;">Variable</div>
<div class="a" style="left:344px;top:399px;width:84px;height:17px;overflow:hidden;font-size:12.5px;letter-spacing:0.5px;line-height:20px;padding-left:2px;color:#1c1c1c;">Necesario</div>
<div class="a" style="left:429px;top:399px;width:93px;height:17px;overflow:hidden;font-size:12.5px;letter-spacing:0.5px;line-height:20px;padding-left:2px;color:#1c1c1c;">Imprevisto</div>
<div class="a" style="left:523px;top:399px;width:71px;height:17px;overflow:hidden;font-size:12.5px;letter-spacing:0.5px;line-height:20px;padding-left:2px;color:#1c1c1c;">OK</div>
<div class="a" style="left:595px;top:399px;width:132px;height:17px;overflow:hidden;font-size:12.5px;letter-spacing:0.5px;line-height:20px;padding-left:2px;color:#1c1c1c;">Oportunidad Ahorro</div>
<div class="a" style="left:728px;top:399px;width:98px;height:17px;overflow:hidden;font-size:12.5px;letter-spacing:0.5px;line-height:20px;padding-left:2px;color:#1c1c1c;">Recortar Gasto</div>
<div class="a" style="left:32px;top:416px;width:74px;height:17px;overflow:hidden;font-size:12.5px;letter-spacing:0.5px;line-height:20px;padding-left:2px;color:#1c1c1c;">Gasto en ube</div>
<div class="a" style="left:107px;top:416px;width:72px;height:17px;overflow:hidden;font-size:12.5px;letter-spacing:0.5px;line-height:20px;padding-right:1px;text-align:right;color:#1c1c1c;letter-spacing:1.05px">$743,90</div>
<div class="a" style="left:180px;top:416px;width:71px;height:17px;overflow:hidden;font-size:12.5px;letter-spacing:0.5px;line-height:20px;padding-left:2px;color:#1c1c1c;">PayPal</div>
<div class="a" style="left:252px;top:416px;width:91px;height:17px;overflow:hidden;font-size:12.5px;letter-spacing:0.5px;line-height:20px;padding-left:2px;color:#1c1c1c;">Variable</div>
<div class="a" style="left:344px;top:416px;width:84px;height:17px;overflow:hidden;font-size:12.5px;letter-spacing:0.5px;line-height:20px;padding-left:2px;color:#1c1c1c;">Prescindible</div>
<div class="a" style="left:429px;top:416px;width:93px;height:17px;overflow:hidden;font-size:12.5px;letter-spacing:0.5px;line-height:20px;padding-left:2px;color:#1c1c1c;">Planeado</div>
<div class="a" style="left:523px;top:416px;width:71px;height:17px;overflow:hidden;font-size:12.5px;letter-spacing:0.5px;line-height:20px;padding-left:2px;color:#1c1c1c;">Revisar</div>
<div class="a" style="left:595px;top:416px;width:132px;height:17px;overflow:hidden;font-size:12.5px;letter-spacing:0.5px;line-height:20px;padding-left:2px;color:#1c1c1c;">Oportunidad Ahorro</div>
<div class="a" style="left:728px;top:416px;width:98px;height:17px;overflow:hidden;font-size:12.5px;letter-spacing:0.5px;line-height:20px;padding-left:2px;color:#1c1c1c;">Recortar Gasto</div>
<div class="a" style="left:32px;top:433px;width:74px;height:17px;overflow:hidden;font-size:12.5px;letter-spacing:0.5px;line-height:20px;padding-left:2px;color:#1c1c1c;">Gasto en cur</div>
<div class="a" style="left:107px;top:433px;width:72px;height:17px;overflow:hidden;font-size:12.5px;letter-spacing:0.5px;line-height:20px;padding-right:1px;text-align:right;color:#1c1c1c;letter-spacing:1.05px">$6.947,58</div>
<div class="a" style="left:180px;top:433px;width:71px;height:17px;overflow:hidden;font-size:12.5px;letter-spacing:0.5px;line-height:20px;padding-left:2px;color:#1c1c1c;">Tarjeta de crédito</div>
<div class="a" style="left:252px;top:433px;width:91px;height:17px;overflow:hidden;font-size:12.5px;letter-spacing:0.5px;line-height:20px;padding-left:2px;color:#1c1c1c;">Variable</div>
<div class="a" style="left:344px;top:433px;width:84px;height:17px;overflow:hidden;font-size:12.5px;letter-spacing:0.5px;line-height:20px;padding-left:2px;color:#1c1c1c;">Prescindible</div>
<div class="a" style="left:429px;top:433px;width:93px;height:17px;overflow:hidden;font-size:12.5px;letter-spacing:0.5px;line-height:20px;padding-left:2px;color:#1c1c1c;">Imprevisto</div>
<div class="a" style="left:523px;top:433px;width:71px;height:17px;overflow:hidden;font-size:12.5px;letter-spacing:0.5px;line-height:20px;padding-left:2px;color:#1c1c1c;">Revisar</div>
<div class="a" style="left:595px;top:433px;width:132px;height:17px;overflow:hidden;font-size:12.5px;letter-spacing:0.5px;line-height:20px;padding-left:2px;color:#1c1c1c;">Oportunidad Ahorro</div>
<div class="a" style="left:728px;top:433px;width:98px;height:17px;overflow:hidden;font-size:12.5px;letter-spacing:0.5px;line-height:20px;padding-left:2px;color:#1c1c1c;">Recortar Gasto</div>
<div class="a" style="left:32px;top:450px;width:74px;height:17px;overflow:hidden;font-size:12.5px;letter-spacing:0.5px;line-height:20px;padding-left:2px;color:#1c1c1c;">Gasto en libr</div>
<div class="a" style="left:107px;top:450px;width:72px;height:17px;overflow:hidden;font-size:12.5px;letter-spacing:0.5px;line-height:20px;padding-right:1px;text-align:right;color:#1c1c1c;letter-spacing:1.05px">$2.689,67</div>
<div class="a" style="left:180px;top:450px;width:71px;height:17px;overflow:hidden;font-size:12.5px;letter-spacing:0.5px;line-height:20px;padding-left:2px;color:#1c1c1c;">Transferencia</div>
<div class="a" style="left:252px;top:450px;width:91px;height:17px;overflow:hidden;font-size:12.5px;letter-spacing:0.5px;line-height:20px;padding-left:2px;color:#1c1c1c;">Variable</div>
<div class="a" style="left:344px;top:450px;width:84px;height:17px;overflow:hidden;font-size:12.5px;letter-spacing:0.5px;line-height:20px;padding-left:2px;color:#1c1c1c;">Prescindible</div>
<div class="a" style="left:429px;top:450px;width:93px;height:17px;overflow:hidden;font-size:12.5px;letter-spacing:0.5px;line-height:20px;padding-left:2px;color:#1c1c1c;">Imprevisto</div>
<div class="a" style="left:523px;top:450px;width:71px;height:17px;overflow:hidden;font-size:12.5px;letter-spacing:0.5px;line-height:20px;padding-left:2px;color:#1c1c1c;">Revisar</div>
<div class="a" style="left:595px;top:450px;width:132px;height:17px;overflow:hidden;font-size:12.5px;letter-spacing:0.5px;line-height:20px;padding-left:2px;color:#1c1c1c;">Oportunidad Ahorro</div>
<div class="a" style="left:728px;top:450px;width:98px;height:17px;overflow:hidden;font-size:12.5px;letter-spacing:0.5px;line-height:20px;padding-left:2px;color:#1c1c1c;">Recortar Gasto</div>
<div class="a" style="left:32px;top:467px;width:74px;height:17px;overflow:hidden;font-size:12.5px;letter-spacing:0.5px;line-height:20px;padding-left:2px;color:#1c1c1c;">Gasto en ube</div>
<div class="a" style="left:107px;top:467px;width:72px;height:17px;overflow:hidden;font-size:12.5px;letter-spacing:0.5px;line-height:20px;padding-right:1px;text-align:right;color:#1c1c1c;letter-spacing:1.05px">$9.140,57</div>
<div class="a" style="left:180px;top:467px;width:71px;height:17px;overflow:hidden;font-size:12.5px;letter-spacing:0.5px;line-height:20px;padding-left:2px;color:#1c1c1c;">Débito</div>
<div class="a" style="left:252px;top:467px;width:91px;height:17px;overflow:hidden;font-size:12.5px;letter-spacing:0.5px;line-height:20px;padding-left:2px;color:#1c1c1c;">Variable</div>
<div class="a" style="left:344px;top:467px;width:84px;height:17px;overflow:hidden;font-size:12.5px;letter-spacing:0.5px;line-height:20px;padding-left:2px;color:#1c1c1c;">Prescindible</div>
<div class="a" style="left:429px;top:467px;width:93px;height:17px;overflow:hidden;font-size:12.5px;letter-spacing:0.5px;line-height:20px;padding-left:2px;color:#1c1c1c;">Planeado</div>
<div class="a" style="left:523px;top:467px;width:71px;height:17px;overflow:hidden;font-size:12.5px;letter-spacing:0.5px;line-height:20px;padding-left:2px;color:#1c1c1c;">Revisar</div>
<div class="a" style="left:595px;top:467px;width:132px;height:17px;overflow:hidden;font-size:12.5px;letter-spacing:0.5px;line-height:20px;padding-left:2px;color:#1c1c1c;">Oportunidad Ahorro</div>
<div class="a" style="left:728px;top:467px;width:98px;height:17px;overflow:hidden;font-size:12.5px;letter-spacing:0.5px;line-height:20px;padding-left:2px;color:#1c1c1c;">Recortar Gasto</div>
<div class="a" style="left:32px;top:484px;width:74px;height:17px;overflow:hidden;font-size:12.5px;letter-spacing:0.5px;line-height:20px;padding-left:2px;color:#1c1c1c;">Gasto en cor</div>
<div class="a" style="left:107px;top:484px;width:72px;height:17px;overflow:hidden;font-size:12.5px;letter-spacing:0.5px;line-height:20px;padding-right:1px;text-align:right;color:#1c1c1c;letter-spacing:1.05px">$8.301,77</div>
<div class="a" style="left:180px;top:484px;width:71px;height:17px;overflow:hidden;font-size:12.5px;letter-spacing:0.5px;line-height:20px;padding-left:2px;color:#1c1c1c;">PayPal</div>
<div class="a" style="left:252px;top:484px;width:91px;height:17px;overflow:hidden;font-size:12.5px;letter-spacing:0.5px;line-height:20px;padding-left:2px;color:#1c1c1c;">Fijo</div>
<div class="a" style="left:344px;top:484px;width:84px;height:17px;overflow:hidden;font-size:12.5px;letter-spacing:0.5px;line-height:20px;padding-left:2px;color:#1c1c1c;">Necesario</div>
<div class="a" style="left:429px;top:484px;width:93px;height:17px;overflow:hidden;font-size:12.5px;letter-spacing:0.5px;line-height:20px;padding-left:2px;color:#1c1c1c;">Planeado</div>
<div class="a" style="left:523px;top:484px;width:71px;height:17px;overflow:hidden;font-size:12.5px;letter-spacing:0.5px;line-height:20px;padding-left:2px;color:#1c1c1c;">OK</div>
<div class="a" style="left:595px;top:484px;width:132px;height:17px;overflow:hidden;font-size:12.5px;letter-spacing:0.5px;line-height:20px;padding-left:2px;color:#1c1c1c;">OK</div>
<div class="a" style="left:728px;top:484px;width:98px;height:17px;overflow:hidden;font-size:12.5px;letter-spacing:0.5px;line-height:20px;padding-left:2px;color:#1c1c1c;">OK</div>
<div class="a" style="left:32px;top:501px;width:74px;height:17px;overflow:hidden;font-size:12.5px;letter-spacing:0.5px;line-height:20px;padding-left:2px;color:#1c1c1c;">Gasto en me</div>
<div class="a" style="left:107px;top:501px;width:72px;height:17px;overflow:hidden;font-size:12.5px;letter-spacing:0.5px;line-height:20px;padding-right:1px;text-align:right;color:#1c1c1c;letter-spacing:1.05px">$7.326,61</div>
<div class="a" style="left:180px;top:501px;width:71px;height:17px;overflow:hidden;font-size:12.5px;letter-spacing:0.5px;line-height:20px;padding-left:2px;color:#1c1c1c;">Tarjeta de crédito</div>
<div class="a" style="left:252px;top:501px;width:91px;height:17px;overflow:hidden;font-size:12.5px;letter-spacing:0.5px;line-height:20px;padding-left:2px;color:#1c1c1c;">Variable</div>
<div class="a" style="left:344px;top:501px;width:84px;height:17px;overflow:hidden;font-size:12.5px;letter-spacing:0.5px;line-height:20px;padding-left:2px;color:#1c1c1c;">Necesario</div>
<div class="a" style="left:429px;top:501px;width:93px;height:17px;overflow:hidden;font-size:12.5px;letter-spacing:0.5px;line-height:20px;padding-left:2px;color:#1c1c1c;">Imprevisto</div>
<div class="a" style="left:523px;top:501px;width:71px;height:17px;overflow:hidden;font-size:12.5px;letter-spacing:0.5px;line-height:20px;padding-left:2px;color:#1c1c1c;">OK</div>
<div class="a" style="left:595px;top:501px;width:132px;height:17px;overflow:hidden;font-size:12.5px;letter-spacing:0.5px;line-height:20px;padding-left:2px;color:#1c1c1c;">Oportunidad Ahorro</div>
<div class="a" style="left:728px;top:501px;width:98px;height:17px;overflow:hidden;font-size:12.5px;letter-spacing:0.5px;line-height:20px;padding-left:2px;color:#1c1c1c;">Recortar Gasto</div>
<div class="a" style="left:32px;top:518px;width:74px;height:17px;overflow:hidden;font-size:12.5px;letter-spacing:0.5px;line-height:20px;padding-left:2px;color:#1c1c1c;">Gasto en reg</div>
<div class="a" style="left:107px;top:518px;width:72px;height:17px;overflow:hidden;font-size:12.5px;letter-spacing:0.5px;line-height:20px;padding-right:1px;text-align:right;color:#1c1c1c;letter-spacing:1.05px">$8.315,89</div>
<div class="a" style="left:180px;top:518px;width:71px;height:17px;overflow:hidden;font-size:12.5px;letter-spacing:0.5px;line-height:20px;padding-left:2px;color:#1c1c1c;">PayPal</div>
<div class="a" style="left:252px;top:518px;width:91px;height:17px;overflow:hidden;font-size:12.5px;letter-spacing:0.5px;line-height:20px;padding-left:2px;color:#1c1c1c;">Variable</div>
<div class="a" style="left:344px;top:518px;width:84px;height:17px;overflow:hidden;font-size:12.5px;letter-spacing:0.5px;line-height:20px;padding-left:2px;color:#1c1c1c;">Prescindible</div>
<div class="a" style="left:429px;top:518px;width:93px;height:17px;overflow:hidden;font-size:12.5px;letter-spacing:0.5px;line-height:20px;padding-left:2px;color:#1c1c1c;">Planeado</div>
<div class="a" style="left:523px;top:518px;width:71px;height:17px;overflow:hidden;font-size:12.5px;letter-spacing:0.5px;line-height:20px;padding-left:2px;color:#1c1c1c;">Revisar</div>
<div class="a" style="left:595px;top:518px;width:132px;height:17px;overflow:hidden;font-size:12.5px;letter-spacing:0.5px;line-height:20px;padding-left:2px;color:#1c1c1c;">Oportunidad Ahorro</div>
<div class="a" style="left:728px;top:518px;width:98px;height:17px;overflow:hidden;font-size:12.5px;letter-spacing:0.5px;line-height:20px;padding-left:2px;color:#1c1c1c;">Recortar Gasto</div>
<div class="a" style="left:32px;top:535px;width:74px;height:17px;overflow:hidden;font-size:12.5px;letter-spacing:0.5px;line-height:20px;padding-left:2px;color:#1c1c1c;">Gasto en cur</div>
<div class="a" style="left:107px;top:535px;width:72px;height:17px;overflow:hidden;font-size:12.5px;letter-spacing:0.5px;line-height:20px;padding-right:1px;text-align:right;color:#1c1c1c;letter-spacing:1.05px">$5.654,18</div>
<div class="a" style="left:180px;top:535px;width:71px;height:17px;overflow:hidden;font-size:12.5px;letter-spacing:0.5px;line-height:20px;padding-left:2px;color:#1c1c1c;">Débito</div>
<div class="a" style="left:252px;top:535px;width:91px;height:17px;overflow:hidden;font-size:12.5px;letter-spacing:0.5px;line-height:20px;padding-left:2px;color:#1c1c1c;">Variable</div>
<div class="a" style="left:344px;top:535px;width:84px;height:17px;overflow:hidden;font-size:12.5px;letter-spacing:0.5px;line-height:20px;padding-left:2px;color:#1c1c1c;">Prescindible</div>
<div class="a" style="left:429px;top:535px;width:93px;height:17px;overflow:hidden;font-size:12.5px;letter-spacing:0.5px;line-height:20px;padding-left:2px;color:#1c1c1c;">Planeado</div>
<div class="a" style="left:523px;top:535px;width:71px;height:17px;overflow:hidden;font-size:12.5px;letter-spacing:0.5px;line-height:20px;padding-left:2px;color:#1c1c1c;">Revisar</div>
<div class="a" style="left:595px;top:535px;width:132px;height:17px;overflow:hidden;font-size:12.5px;letter-spacing:0.5px;line-height:20px;padding-left:2px;color:#1c1c1c;">Oportunidad Ahorro</div>
<div class="a" style="left:728px;top:535px;width:98px;height:17px;overflow:hidden;font-size:12.5px;letter-spacing:0.5px;line-height:20px;padding-left:2px;color:#1c1c1c;">Recortar Gasto</div>
<div class="a" style="left:32px;top:552px;width:74px;height:17px;overflow:hidden;font-size:12.5px;letter-spacing:0.5px;line-height:20px;padding-left:2px;color:#1c1c1c;">Gasto en spc</div>
<div class="a" style="left:107px;top:552px;width:72px;height:17px;overflow:hidden;font-size:12.5px;letter-spacing:0.5px;line-height:20px;padding-right:1px;text-align:right;color:#1c1c1c;letter-spacing:1.05px">$7.343,24</div>
<div class="a" style="left:180px;top:552px;width:71px;height:17px;overflow:hidden;font-size:12.5px;letter-spacing:0.5px;line-height:20px;padding-left:2px;color:#1c1c1c;">Efectivo</div>
<div class="a" style="left:252px;top:552px;width:91px;height:17px;overflow:hidden;font-size:12.5px;letter-spacing:0.5px;line-height:20px;padding-left:2px;color:#1c1c1c;">Fijo</div>
<div class="a" style="left:344px;top:552px;width:84px;height:17px;overflow:hidden;font-size:12.5px;letter-spacing:0.5px;line-height:20px;padding-left:2px;color:#1c1c1c;">Prescindible</div>
<div class="a" style="left:429px;top:552px;width:93px;height:17px;overflow:hidden;font-size:12.5px;letter-spacing:0.5px;line-height:20px;padding-left:2px;color:#1c1c1c;">Imprevisto</div>
<div class="a" style="left:523px;top:552px;width:71px;height:17px;overflow:hidden;font-size:12.5px;letter-spacing:0.5px;line-height:20px;padding-left:2px;color:#1c1c1c;">Revisar</div>
<div class="a" style="left:595px;top:552px;width:132px;height:17px;overflow:hidden;font-size:12.5px;letter-spacing:0.5px;line-height:20px;padding-left:2px;color:#1c1c1c;">Oportunidad Ahorro</div>
<div class="a" style="left:728px;top:552px;width:98px;height:17px;overflow:hidden;font-size:12.5px;letter-spacing:0.5px;line-height:20px;padding-left:2px;color:#1c1c1c;">Recortar Gasto</div>
<div class="a" style="left:32px;top:569px;width:74px;height:17px;overflow:hidden;font-size:12.5px;letter-spacing:0.5px;line-height:20px;padding-left:2px;color:#1c1c1c;">Gasto en me</div>
<div class="a" style="left:107px;top:569px;width:72px;height:17px;overflow:hidden;font-size:12.5px;letter-spacing:0.5px;line-height:20px;padding-right:1px;text-align:right;color:#1c1c1c;letter-spacing:1.05px">$4.102,43</div>
<div class="a" style="left:180px;top:569px;width:71px;height:17px;overflow:hidden;font-size:12.5px;letter-spacing:0.5px;line-height:20px;padding-left:2px;color:#1c1c1c;">Débito</div>
<div class="a" style="left:252px;top:569px;width:91px;height:17px;overflow:hidden;font-size:12.5px;letter-spacing:0.5px;line-height:20px;padding-left:2px;color:#1c1c1c;">Variable</div>
<div class="a" style="left:344px;top:569px;width:84px;height:17px;overflow:hidden;font-size:12.5px;letter-spacing:0.5px;line-height:20px;padding-left:2px;color:#1c1c1c;">Necesario</div>
<div class="a" style="left:429px;top:569px;width:93px;height:17px;overflow:hidden;font-size:12.5px;letter-spacing:0.5px;line-height:20px;padding-left:2px;color:#1c1c1c;">Planeado</div>
<div class="a" style="left:523px;top:569px;width:71px;height:17px;overflow:hidden;font-size:12.5px;letter-spacing:0.5px;line-height:20px;padding-left:2px;color:#1c1c1c;">OK</div>
<div class="a" style="left:595px;top:569px;width:132px;height:17px;overflow:hidden;font-size:12.5px;letter-spacing:0.5px;line-height:20px;padding-left:2px;color:#1c1c1c;">Oportunidad Ahorro</div>
<div class="a" style="left:728px;top:569px;width:98px;height:17px;overflow:hidden;font-size:12.5px;letter-spacing:0.5px;line-height:20px;padding-left:2px;color:#1c1c1c;">OK</div>
<div class="a" style="left:32px;top:586px;width:74px;height:17px;overflow:hidden;font-size:12.5px;letter-spacing:0.5px;line-height:20px;padding-left:2px;color:#1c1c1c;">Gasto en spc</div>
<div class="a" style="left:107px;top:586px;width:72px;height:17px;overflow:hidden;font-size:12.5px;letter-spacing:0.5px;line-height:20px;padding-right:1px;text-align:right;color:#1c1c1c;letter-spacing:1.05px">$3.965,02</div>
<div class="a" style="left:180px;top:586px;width:71px;height:17px;overflow:hidden;font-size:12.5px;letter-spacing:0.5px;line-height:20px;padding-left:2px;color:#1c1c1c;">Débito</div>
<div class="a" style="left:252px;top:586px;width:91px;height:17px;overflow:hidden;font-size:12.5px;letter-spacing:0.5px;line-height:20px;padding-left:2px;color:#1c1c1c;">Fijo</div>
<div class="a" style="left:344px;top:586px;width:84px;height:17px;overflow:hidden;font-size:12.5px;letter-spacing:0.5px;line-height:20px;padding-left:2px;color:#1c1c1c;">Prescindible</div>
<div class="a" style="left:429px;top:586px;width:93px;height:17px;overflow:hidden;font-size:12.5px;letter-spacing:0.5px;line-height:20px;padding-left:2px;color:#1c1c1c;">Imprevisto</div>
<div class="a" style="left:523px;top:586px;width:71px;height:17px;overflow:hidden;font-size:12.5px;letter-spacing:0.5px;line-height:20px;padding-left:2px;color:#1c1c1c;">Revisar</div>
<div class="a" style="left:595px;top:586px;width:132px;height:17px;overflow:hidden;font-size:12.5px;letter-spacing:0.5px;line-height:20px;padding-left:2px;color:#1c1c1c;">Oportunidad Ahorro</div>
<div class="a" style="left:728px;top:586px;width:98px;height:17px;overflow:hidden;font-size:12.5px;letter-spacing:0.5px;line-height:20px;padding-left:2px;color:#1c1c1c;">Recortar Gasto</div>
<div class="a" style="left:32px;top:603px;width:74px;height:17px;overflow:hidden;font-size:12.5px;letter-spacing:0.5px;line-height:20px;padding-left:2px;color:#1c1c1c;">Gasto en cin</div>
<div class="a" style="left:107px;top:603px;width:72px;height:17px;overflow:hidden;font-size:12.5px;letter-spacing:0.5px;line-height:20px;padding-right:1px;text-align:right;color:#1c1c1c;letter-spacing:1.05px">$2.071,01</div>
<div class="a" style="left:180px;top:603px;width:71px;height:17px;overflow:hidden;font-size:12.5px;letter-spacing:0.5px;line-height:20px;padding-left:2px;color:#1c1c1c;">PayPal</div>
<div class="a" style="left:252px;top:603px;width:91px;height:17px;overflow:hidden;font-size:12.5px;letter-spacing:0.5px;line-height:20px;padding-left:2px;color:#1c1c1c;">Variable</div>
<div class="a" style="left:344px;top:603px;width:84px;height:17px;overflow:hidden;font-size:12.5px;letter-spacing:0.5px;line-height:20px;padding-left:2px;color:#1c1c1c;">Prescindible</div>
<div class="a" style="left:429px;top:603px;width:93px;height:17px;overflow:hidden;font-size:12.5px;letter-spacing:0.5px;line-height:20px;padding-left:2px;color:#1c1c1c;">Planeado</div>
<div class="a" style="left:523px;top:603px;width:71px;height:17px;overflow:hidden;font-size:12.5px;letter-spacing:0.5px;line-height:20px;padding-left:2px;color:#1c1c1c;">Revisar</div>
<div class="a" style="left:595px;top:603px;width:132px;height:17px;overflow:hidden;font-size:12.5px;letter-spacing:0.5px;line-height:20px;padding-left:2px;color:#1c1c1c;">Oportunidad Ahorro</div>
<div class="a" style="left:728px;top:603px;width:98px;height:17px;overflow:hidden;font-size:12.5px;letter-spacing:0.5px;line-height:20px;padding-left:2px;color:#1c1c1c;">Recortar Gasto</div>
<div class="a" style="left:827px;top:331px;width:140px;height:17px;overflow:hidden;font-size:12.5px;letter-spacing:0.5px;line-height:20px;padding-right:1px;text-align:right;color:#1c1c1c;letter-spacing:1.05px">$49.723,20</div>
<div class="a" style="left:827px;top:348px;width:140px;height:17px;overflow:hidden;font-size:12.5px;letter-spacing:0.5px;line-height:20px;padding-right:1px;text-align:right;color:#1c1c1c;letter-spacing:1.05px">$ 195.863,15</div>
<div class="a" style="left:968px;top:331px;width:85px;height:17px;overflow:hidden;font-size:12.5px;letter-spacing:0.5px;line-height:20px;padding-right:1px;text-align:right;color:#1c1c1c;padding-right:3px">9</div>
<div class="a" style="left:24px;top:382px;width:7px;height:17px;overflow:hidden;font-size:12.5px;letter-spacing:0.5px;line-height:18px;text-align:right;color:#1c1c1c">z</div>
<div class="a" style="left:24px;top:484px;width:7px;height:17px;overflow:hidden;font-size:12.5px;letter-spacing:0.5px;line-height:18px;text-align:right;color:#1c1c1c">s</div>
<div class="a" style="left:24px;top:314px;width:1029px;height:18px;background:#22ec90"></div>
<div class="a" style="left:967px;top:314px;width:1px;height:18px;background:#c8f5dc"></div>
<div class="a" style="left:24px;top:314px;width:803px;height:18px;border:1px solid #13281c"></div>
<div class="a" style="left:31px;top:314px;width:1px;height:18px;background:#13281c"></div>
<div class="a" style="left:106px;top:314px;width:1px;height:18px;background:#13281c"></div>
<div class="a" style="left:179px;top:314px;width:1px;height:18px;background:#13281c"></div>
<div class="a" style="left:251px;top:314px;width:1px;height:18px;background:#13281c"></div>
<div class="a" style="left:343px;top:314px;width:1px;height:18px;background:#13281c"></div>
<div class="a" style="left:428px;top:314px;width:1px;height:18px;background:#13281c"></div>
<div class="a" style="left:522px;top:314px;width:1px;height:18px;background:#13281c"></div>
<div class="a" style="left:594px;top:314px;width:1px;height:18px;background:#13281c"></div>
<div class="a" style="left:727px;top:314px;width:1px;height:18px;background:#13281c"></div>
<div class="a" style="left:32px;top:314px;width:74px;height:17px;overflow:hidden;font-size:12.5px;font-weight:bold;color:#0b2e18;line-height:21px;padding-left:4px">Descripció</div>
<div class="a" style="left:106px;top:314px;width:73px;height:17px;font-size:12.5px;font-weight:bold;color:#0b2e18;line-height:21px;text-align:center">Monto</div>
<div class="a" style="left:180px;top:314px;width:71px;height:17px;overflow:hidden;font-size:12.5px;font-weight:bold;color:#0b2e18;line-height:21px;padding-left:7px">Forma de</div>
<div class="a" style="left:252px;top:314px;width:91px;height:17px;overflow:hidden;font-size:12.5px;font-weight:bold;color:#0b2e18;line-height:21px;padding-left:5px">¿Es gasto fijo</div>
<div class="a" style="left:343px;top:314px;width:85px;height:17px;font-size:12.5px;font-weight:bold;color:#0b2e18;line-height:21px;text-align:center">¿Es</div>
<div class="a" style="left:429px;top:314px;width:93px;height:17px;overflow:hidden;font-size:12.5px;font-weight:bold;color:#0b2e18;line-height:21px;padding-left:1px">¿Fue planeado</div>
<div class="a" style="left:522px;top:314px;width:72px;height:17px;font-size:12.5px;font-weight:bold;color:#0b2e18;line-height:21px;text-align:center">SI</div>
<div class="a" style="left:594px;top:314px;width:133px;height:17px;font-size:12.5px;font-weight:bold;color:#0b2e18;line-height:21px;text-align:center">Y</div>
<div class="a" style="left:727px;top:314px;width:99px;height:17px;font-size:12.5px;font-weight:bold;color:#0b2e18;line-height:21px;text-align:center">O</div>
<div class="a" style="left:826px;top:314px;width:141px;height:17px;font-size:12.5px;font-weight:bold;color:#0b2e18;line-height:21px;text-align:center">Casos SUMAR.SI</div>
<div class="a" style="left:967px;top:314px;width:86px;height:17px;font-size:12.5px;font-weight:bold;color:#0b2e18;line-height:21px;text-align:center">CONTAR.SI</div>
<div class="a" style="left:251px;top:197px;width:92px;height:86px;background:#13ee8e"></div>
<div class="a" style="left:252px;top:197px;width:92px;height:17px;text-align:center;font-size:12.5px;font-weight:bold;color:#0b2e18;line-height:21px;line-height:21px">1</div>
<div class="a" style="left:344px;top:198px;height:16px;font-size:12.5px;letter-spacing:0.27px;line-height:18px;padding-left:2px;padding-right:3px;color:#1c1c1c;background:#fff"><b>SI:</b> Si el gasto es "Prescindible", marcar como "Revisar".</div>
<div class="a" style="left:252px;top:214px;width:92px;height:17px;text-align:center;font-size:12.5px;font-weight:bold;color:#0b2e18;line-height:21px;line-height:21px">2</div>
<div class="a" style="left:344px;top:215px;height:16px;font-size:12.5px;letter-spacing:0.27px;line-height:18px;padding-left:2px;padding-right:3px;color:#1c1c1c;background:#fff"><b>Y:</b> Identificar gastos que sean "Fijos" <b>y</b> "Necesarios".</div>
<div class="a" style="left:252px;top:231px;width:92px;height:17px;text-align:center;font-size:12.5px;font-weight:bold;color:#0b2e18;line-height:21px;line-height:21px">3</div>
<div class="a" style="left:344px;top:232px;height:16px;font-size:12.5px;letter-spacing:0.27px;line-height:18px;padding-left:2px;padding-right:3px;color:#1c1c1c;background:#fff"><b>O:</b> Marcar si un gasto fue "Imprevisto" <b>o</b> "Prescindible"</div>
<div class="a" style="left:252px;top:248px;width:92px;height:17px;text-align:center;font-size:12.5px;font-weight:bold;color:#0b2e18;line-height:21px;line-height:21px">4</div>
<div class="a" style="left:344px;top:249px;height:16px;font-size:12.5px;letter-spacing:0.27px;line-height:18px;padding-left:2px;padding-right:3px;color:#1c1c1c;background:#fff"><b>SUMAR.SI:</b> Sumar todos los gastos de "Entretenimiento".</div>
<div class="a" style="left:252px;top:265px;width:92px;height:17px;text-align:center;font-size:12.5px;font-weight:bold;color:#0b2e18;line-height:21px;line-height:21px">5</div>
<div class="a" style="left:344px;top:266px;height:16px;font-size:12.5px;letter-spacing:0.27px;line-height:18px;padding-left:2px;padding-right:3px;color:#1c1c1c;background:#fff"><b>CONTAR.SI:</b> Sumar todos los gastos de "Entretenimiento".</div>
<div class="a" style="left:26px;top:257px;width:160px;height:17px;background:rgba(0,0,0,0.26);filter:blur(4px);border-radius:6px"></div>
<div class="a" style="left:25px;top:198px;width:152px;height:63px;background:#10f08e;border-radius:0 9px 9px 0;border:1px solid #b5f7d8;border-left:none;overflow:hidden"><div style="position:absolute;left:0;top:13px;font-size:37px;line-height:40px;color:#0a0a0a">cas</div></div>
<div class="a" style="left:0;top:610px;width:1195px;height:32px;background:#efefef"></div>
<div class="a" style="left:0;top:642px;width:1195px;height:5px;background:#f7f7f7"></div>
<svg style="left:27px;top:619px" width="8" height="12"><path d="M6 1 L1.5 6 L6 11" stroke="#9a9a9a" stroke-width="1.1" fill="none"/></svg>
<svg style="left:60px;top:619px" width="8" height="12"><path d="M2 1 L6.5 6 L2 11" stroke="#9a9a9a" stroke-width="1.1" fill="none"/></svg>
<div class="a" style="left:124px;top:619px;font-size:13.5px;line-height:16px;color:#333">Intro</div>
<div class="a" style="left:167px;top:618px;width:1px;height:15px;background:#cfcfcf"></div>
<div class="a" style="left:171px;top:609px;width:131px;height:29px;background:#fff;border-radius:0 0 6px 6px;box-shadow:0 1px 2px rgba(0,0,0,0.15)"></div>
<div class="a" style="left:180px;top:616px;font-size:13.8px;line-height:16px;color:#1f1f1f;-webkit-text-stroke:0.35px #1f1f1f">Funciones Lógicas</div>
<div class="a" style="left:179px;top:633px;width:116px;height:2px;background:#2f6e50"></div>
<div class="a" style="left:306px;top:618px;width:1px;height:15px;background:#cfcfcf"></div>
<svg style="left:348px;top:620px" width="12" height="12"><path d="M6 0 V12 M0 6 H12" stroke="#444" stroke-width="1.1"/></svg>
<svg style="left:819px;top:621px" width="4" height="12"><circle cx="2" cy="1.5" r="1.1" fill="#333"/><circle cx="2" cy="6" r="1.1" fill="#333"/><circle cx="2" cy="10.5" r="1.1" fill="#333"/></svg>
<div class="a" style="left:836px;top:617px;width:400px;height:17px;background:#f7f7f7;border-radius:8px"></div>
<svg style="left:842px;top:622px" width="8" height="9"><path d="M7 0 L7 9 L0 4.5 Z" fill="#6b6b6b"/></svg>
<div class="a" style="left:930px;top:621px;width:300px;height:9px;background:#6f6f6f;border-radius:5px"></div>
<div class="a" style="left:1065px;top:642px;width:40px;height:5px;background:#d6d6d6"></div>
<div class="a" style="left:1078px;top:645px;width:14px;height:2px;background:#222"></div>
<div class="a" style="left:1118px;top:645px;width:14px;height:2px;background:#222"></div>
<div class="a" style="left:1158px;top:645px;width:14px;height:2px;background:#222"></div>
<svg style="left:983px;top:574px" width="56" height="66"><path d="M28 6 L50 30 Q53 33 50 36 L28 60 Q25 63 22 60 L8 45" stroke="rgba(170,220,120,0.16)" stroke-width="9" fill="none" stroke-linecap="round" stroke-linejoin="round"/><path d="M20 38 L8 25 Q5 22 8 19 L22 6 Q25 3 28 6" stroke="rgba(170,220,120,0.16)" stroke-width="9" fill="none" stroke-linecap="round"/></svg>
<div class="a" style="left:1052px;top:580px;font-size:44px;letter-spacing:4.6px;line-height:50px;color:rgba(0,0,0,0.07);-webkit-text-stroke:1.2px rgba(0,0,0,0.07)">Platzi</div>
</body></html>
